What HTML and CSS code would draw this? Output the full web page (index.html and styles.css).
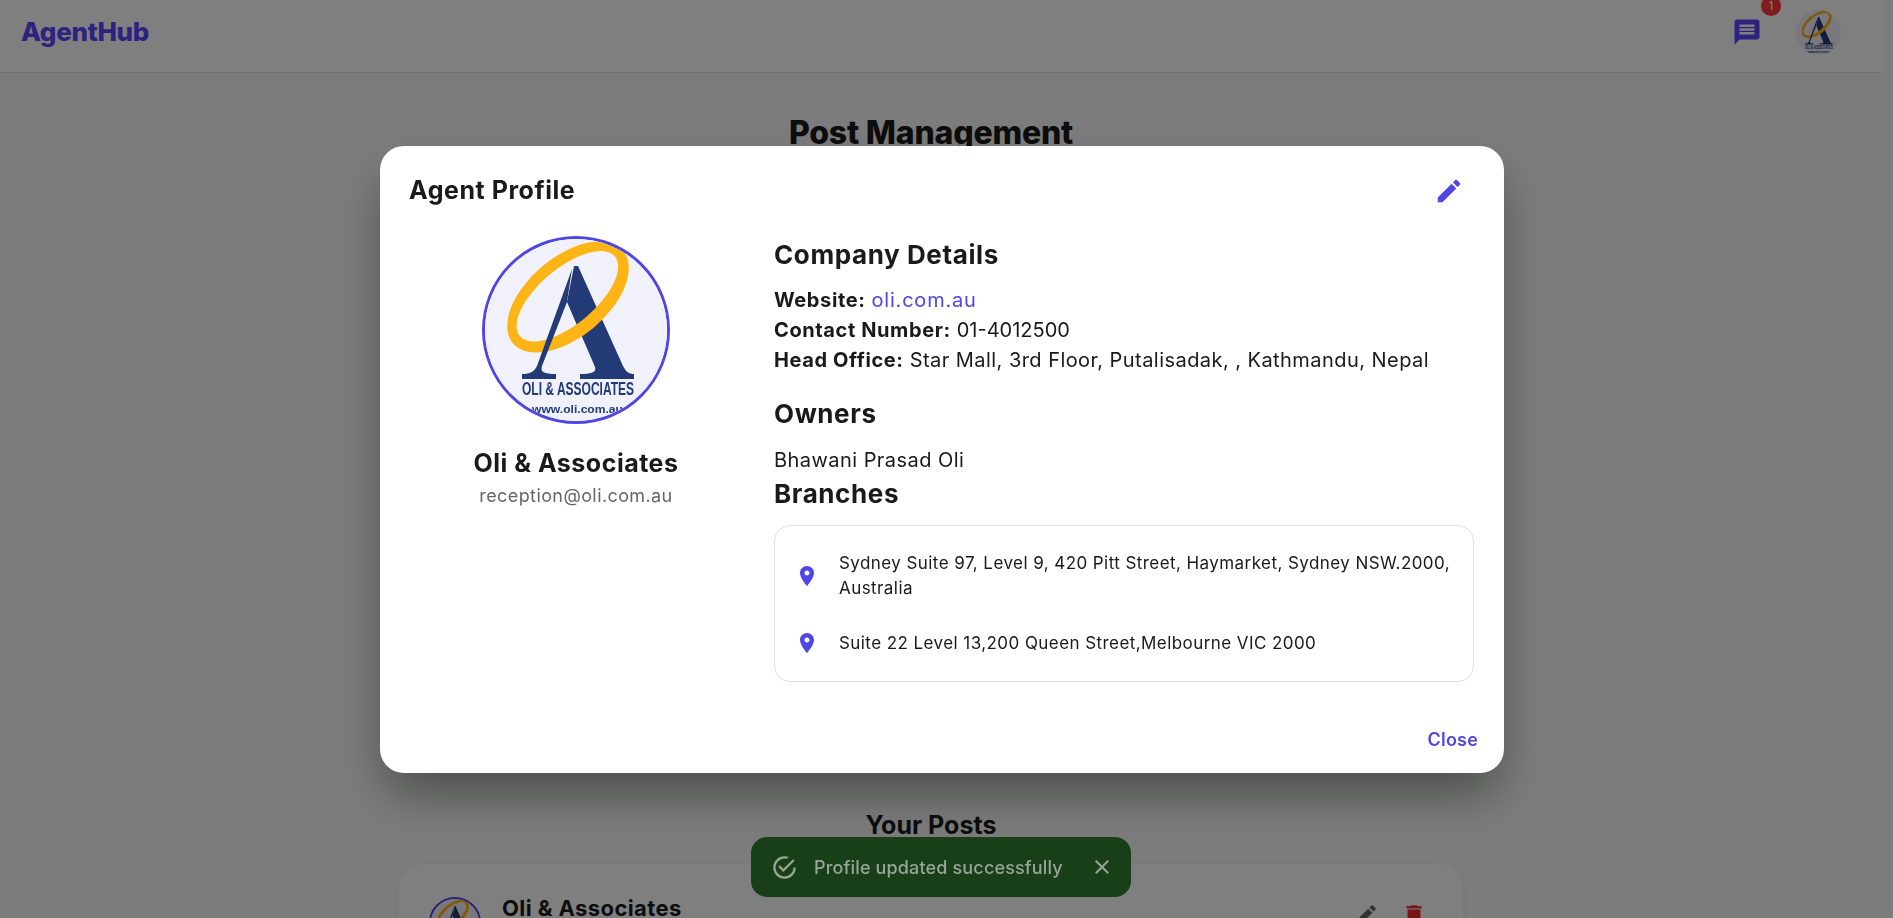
FILE: index.html
```html
<!DOCTYPE html>
<html lang="en">
<head>
<meta charset="utf-8">
<title>AgentHub</title>
<link rel="stylesheet" href="styles.css">
</head>
<body>
<svg class="defs" width="0" height="0" aria-hidden="true">
  <symbol id="logo" viewBox="3 3 182 182">
    <rect width="188" height="188" fill="#f1f1fb"/>
    <path fill="#223a75" d="M92 30h4L141 130C144 136 147 138 152 138V143H98V138C108 138 115 137 113 131L85 66Z"/>
    <g transform="rotate(-40 86 61)">
      <path fill="#fdb515" fill-rule="evenodd" d="M14 61a72 40 0 1 0 144 0a72 40 0 1 0-144 0zM24 60a62 28 0 1 0 124 0a62 28 0 1 0-124 0z"/>
    </g>
    <path fill="#223a75" d="M90 33L85 66L60 130C58 136 62 138 74 138V143H40V138C48 138 52 136 55 130Z"/>
    <text class="logo-name" x="40" y="159" textLength="112" lengthAdjust="spacingAndGlyphs">OLI &amp; ASSOCIATES</text>
    <text class="logo-url" x="50" y="177" textLength="91" lengthAdjust="spacingAndGlyphs">www.oli.com.au</text>
  </symbol>
</svg>

<div class="app">
  <header class="topbar">
    <div class="brand">AgentHub</div>
    <div class="topbar-actions">
      <div class="chat">
        <svg class="chat-icon" viewBox="0 0 24 24"><path d="M20 2H4c-1.1 0-1.99.9-1.99 2L2 22l4-4h14c1.1 0 2-.9 2-2V4c0-1.1-.9-2-2-2zm-2 12H6v-2h12v2zm0-3H6V9h12v2zm0-3H6V6h12v2z"/></svg>
        <span class="badge">1</span>
      </div>
      <div class="top-avatar"><svg class="logo-svg"><use href="#logo"/></svg></div>
    </div>
  </header>
  <main class="main">
    <div class="content">
      <h1 class="page-title">Post Management</h1>
      <h2 class="posts-title">Your Posts</h2>
      <article class="post-card">
        <div class="post-avatar"><svg class="logo-svg"><use href="#logo"/></svg></div>
        <div class="post-name">Oli &amp; Associates</div>
        <div class="post-actions">
          <svg class="post-icon edit" viewBox="0 0 24 24"><path d="M3 17.25V21h3.75L17.81 9.94l-3.75-3.75L3 17.25zM20.71 7.04c.39-.39.39-1.02 0-1.41l-2.34-2.34a.9959.9959 0 0 0-1.41 0l-1.83 1.83 3.75 3.75 1.83-1.83z"/></svg>
          <svg class="post-icon trash" viewBox="0 0 24 24"><path d="M6 19c0 1.1.9 2 2 2h8c1.1 0 2-.9 2-2V7H6v12zM19 4h-3.5l-1-1h-5l-1 1H5v2h14V4z"/></svg>
        </div>
      </article>
    </div>
  </main>
</div>

<div class="overlay">
  <section class="modal">
    <div class="modal-head">
      <h2 class="modal-title">Agent Profile</h2>
      <svg class="modal-edit" viewBox="0 0 24 24"><path d="M3 17.25V21h3.75L17.81 9.94l-3.75-3.75L3 17.25zM20.71 7.04c.39-.39.39-1.02 0-1.41l-2.34-2.34a.9959.9959 0 0 0-1.41 0l-1.83 1.83 3.75 3.75 1.83-1.83z"/></svg>
    </div>
    <div class="modal-body">
      <div class="identity">
        <div class="big-avatar"><svg class="logo-svg"><use href="#logo"/></svg></div>
        <div class="agent-name">Oli &amp; Associates</div>
        <div class="agent-email">reception@oli.com.au</div>
      </div>
      <div class="details">
        <h3 class="section-title">Company Details</h3>
        <div class="fact-list">
          <p class="fact"><b>Website:</b> <a class="link">oli.com.au</a></p>
          <p class="fact"><b>Contact Number:</b> <span class="num">01-4012500</span></p>
          <p class="fact"><b>Head Office:</b> Star Mall, 3rd Floor, Putalisadak, , Kathmandu, Nepal</p>
        </div>
        <h3 class="section-title owners-title">Owners</h3>
        <p class="fact owner">Bhawani Prasad Oli</p>
        <h3 class="section-title">Branches</h3>
        <ul class="branches">
          <li class="branch">
            <svg class="pin" viewBox="0 0 24 24"><path d="M12 2C8.13 2 5 5.13 5 9c0 5.25 7 13 7 13s7-7.75 7-13c0-3.87-3.13-7-7-7zm0 9.5c-1.38 0-2.5-1.12-2.5-2.5s1.12-2.5 2.5-2.5 2.5 1.12 2.5 2.5-1.12 2.5-2.5 2.5z"/></svg>
            <span class="branch-text">Sydney Suite 97, Level 9, 420 Pitt Street, Haymarket, Sydney NSW.2000, Australia</span>
          </li>
          <li class="branch">
            <svg class="pin" viewBox="0 0 24 24"><path d="M12 2C8.13 2 5 5.13 5 9c0 5.25 7 13 7 13s7-7.75 7-13c0-3.87-3.13-7-7-7zm0 9.5c-1.38 0-2.5-1.12-2.5-2.5s1.12-2.5 2.5-2.5 2.5 1.12 2.5 2.5-1.12 2.5-2.5 2.5z"/></svg>
            <span class="branch-text">Suite 22 Level 13,200 Queen Street,Melbourne VIC 2000</span>
          </li>
        </ul>
      </div>
    </div>
    <div class="modal-foot"><button class="close-btn">Close</button></div>
  </section>
</div>

<div class="toast">
  <svg class="toast-check" viewBox="0 0 24 24"><path d="M20 12a8 8 0 0 1-8 8 8 8 0 0 1-8-8 8 8 0 0 1 8-8c.76 0 1.5.11 2.2.31l1.57-1.57A9.822 9.822 0 0 0 12 2 10 10 0 0 0 2 12a10 10 0 0 0 10 10 10 10 0 0 0 10-10M7.91 10.08 6.5 11.5 11 16 21 6l-1.41-1.42L11 13.17l-3.09-3.09z"/></svg>
  <span class="toast-text">Profile updated successfully</span>
  <svg class="toast-close" viewBox="0 0 24 24"><path d="M19 6.41 17.59 5 12 10.59 6.41 5 5 6.41 10.59 12 5 17.59 6.41 19 12 13.41 17.59 19 19 17.59 13.41 12z"/></svg>
</div>
</body>
</html>
```
FILE: styles.css
```css
* { box-sizing: border-box; }
html, body { margin: 0; height: 100%; overflow: hidden; }
body {
  font-family: Inter, "Open Sans", "Liberation Sans", sans-serif;
  color: #1a1a1a;
  background: #f6f9f6;
}
h1, h2, h3, p, ul { margin: 0; padding: 0; }
.defs { position: absolute; }
.logo-svg { display: block; width: 100%; height: 100%; }
.logo-name { font: 700 18px "Liberation Sans Narrow", "Liberation Sans", sans-serif; fill: #223a75; }
.logo-url { font: 700 11px "Liberation Sans", sans-serif; fill: #223a75; }

.app { width: 1882px; }
.topbar {
  height: 73px;
  padding: 0 41px 8px 21px;
  display: flex;
  align-items: center;
  justify-content: space-between;
  background: #fff;
  border-bottom: 1px solid #dedede;
}
.brand { margin-top: -2px; font-size: 26px; font-weight: 800; letter-spacing: -0.3px; color: #5b44ff; }
.topbar-actions { display: flex; align-items: center; gap: 34px; }
.chat { position: relative; width: 30px; height: 30px; }
.chat-icon { display: block; width: 30px; height: 30px; fill: #5b44ff; }
.badge {
  position: absolute;
  top: -21px;
  left: 29px;
  width: 20px;
  height: 20px;
  border-radius: 50%;
  background: #ff3838;
  color: #fff;
  font-size: 12px;
  line-height: 20px;
  text-align: center;
}
.top-avatar { width: 45px; height: 45px; border-radius: 50%; overflow: hidden; }

.main { padding: 37px 20px 0 0; }
.content { width: 1064px; margin: 0 auto; }
.page-title { font-size: 32px; line-height: 45px; font-weight: 800; letter-spacing: -0.2px; text-align: center; }
.posts-title { margin-top: 652px; font-size: 25px; line-height: 36px; font-weight: 700; text-align: center; }
.post-card {
  margin-top: 21px;
  height: 160px;
  padding: 33px 30px 0;
  display: flex;
  align-items: flex-start;
  background: #fff;
  border-radius: 24px;
  box-shadow: 0 2px 8px rgba(0, 0, 0, .06);
}
.post-avatar { width: 52px; height: 52px; border: 2px solid #4f46e5; border-radius: 50%; overflow: hidden; flex: none; }
.post-name { margin: -3px 0 0 21px; font-size: 22px; line-height: 28px; font-weight: 700; letter-spacing: .4px; }
.post-actions { margin: 5px 0 0 auto; padding-right: 6px; display: flex; gap: 22px; }
.post-icon { width: 26px; height: 26px; }
.post-icon.edit { fill: #666; }
.post-icon.trash { fill: #f02a2a; }

.overlay {
  position: fixed;
  inset: 0;
  z-index: 10;
  padding-right: 9px;
  display: flex;
  align-items: center;
  justify-content: center;
  background: rgba(0, 0, 0, .5);
}
.modal {
  width: 1124px;
  height: 627px;
  padding: 24px 26px 21px 30px;
  display: flex;
  flex-direction: column;
  background: #fff;
  border-radius: 24px;
  box-shadow: 0 25px 50px -6px rgba(0, 0, 0, .4);
}
.modal-head { height: 40px; display: flex; align-items: center; justify-content: space-between; }
.modal-title { margin-left: -1px; font-size: 25px; font-weight: 650; letter-spacing: .55px; }
.modal-edit { width: 30px; height: 30px; margin: 2px 14px 0 0; fill: #4f46e5; }
.modal-body { margin-top: 26px; padding-right: 4px; display: grid; grid-template-columns: 332px 1fr; column-gap: 32px; }
.identity { display: flex; flex-direction: column; align-items: center; }
.big-avatar { width: 188px; height: 188px; border: 3px solid #4f46e5; border-radius: 50%; overflow: hidden; }
.agent-name { margin-top: 20px; font-size: 25px; line-height: 38px; font-weight: 650; letter-spacing: .5px; }
.agent-email { font-size: 18px; line-height: 28px; letter-spacing: .4px; color: #666; }
.section-title { font-size: 26px; line-height: 38px; font-weight: 650; letter-spacing: .6px; }
.fact-list { margin-top: 11px; }
.fact { font-size: 20px; line-height: 30px; letter-spacing: .45px; }
.fact b { font-weight: 700; letter-spacing: .6px; }
.fact .num { letter-spacing: 0; }
.link { color: #4f46e5; letter-spacing: .8px; }
.owners-title { margin-top: 20px; }
.owner { margin-top: 12px; }
.branches {
  margin-top: 12px;
  height: 157px;
  padding: 25px 20px 0;
  list-style: none;
  border: 1px solid #e0e0e0;
  border-radius: 16px;
  display: flex;
  flex-direction: column;
  gap: 30px;
}
.branch { display: flex; align-items: center; gap: 20px; }
.pin { width: 24px; height: 24px; flex: none; fill: #4f46e5; }
.branch-text { font-size: 17px; line-height: 25px; letter-spacing: .43px; }
.modal-foot { margin-top: auto; display: flex; justify-content: flex-end; }
.close-btn {
  padding: 0;
  border: 0;
  background: none;
  color: #4f46e5;
  font: 600 18px/24px Inter, "Open Sans", sans-serif;
  letter-spacing: .2px;
}

.toast {
  position: fixed;
  z-index: 20;
  left: 751px;
  top: 837px;
  width: 380px;
  height: 60px;
  padding: 0 17px 0 20px;
  display: flex;
  align-items: center;
  background: #183f18;
  border-radius: 16px;
  color: #97a597;
}
.toast-check { width: 27px; height: 27px; flex: none; fill: #97a597; }
.toast-text { margin-left: 16px; font-size: 18px; font-weight: 500; letter-spacing: .15px; }
.toast-close { width: 24px; height: 24px; margin-left: auto; flex: none; fill: #97a597; }
```
